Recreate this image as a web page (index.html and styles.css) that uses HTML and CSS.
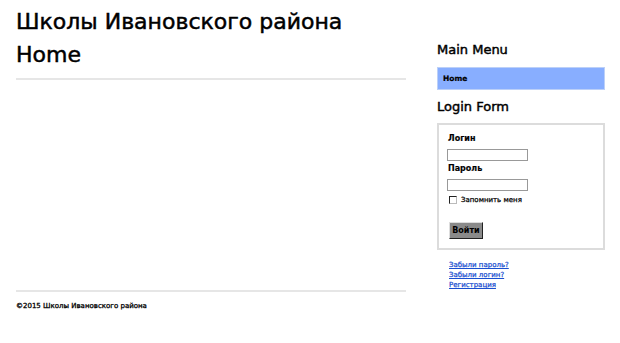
FILE: index.html
```html
<!DOCTYPE html>
<html lang="ru">
<head>
<meta charset="utf-8">
<title>Школы Ивановского района</title>
<link rel="stylesheet" href="styles.css">
</head>
<body>
<div class="page">
  <div class="layout">
    <div class="main">
      <div class="site-title">Школы Ивановского района</div>
      <h1 class="page-title">Home</h1>
    </div>
    <div class="sidebar">
      <h3 class="module-title">Main Menu</h3>
      <ul class="menu">
        <li class="menu-item active">Home</li>
      </ul>
      <h3 class="module-title">Login Form</h3>
      <form class="login-box">
        <label class="field-label">Логин</label>
        <input class="field-input first" type="text">
        <label class="field-label">Пароль</label>
        <input class="field-input" type="password">
        <label class="remember"><span class="check"></span>Запомнить меня</label>
        <button class="submit" type="button">Войти</button>
      </form>
      <ul class="links">
        <li><a href="#">Забыли пароль?</a></li>
        <li><a href="#">Забыли логин?</a></li>
        <li><a href="#">Регистрация</a></li>
      </ul>
    </div>
  </div>
  <div class="footer">
    <div class="footer-text">©2015 Школы Ивановского района</div>
  </div>
</div>
</body>
</html>
```
FILE: styles.css
```css
* { box-sizing: border-box; }
body {
  margin: 0;
  background: #fff;
  color: #000;
  font-family: "DejaVu Sans", Verdana, sans-serif;
}
.page { padding: 0 15px 0 16px; }
.layout { display: flex; gap: 31px; }
.main { width: 390px; }
.site-title {
  font-size: 22px;
  line-height: 28px;
  padding-top: 8px;
  -webkit-text-stroke: 0.5px #000;
}
.page-title {
  margin: 0;
  font-size: 22px;
  font-weight: normal;
  line-height: 28px;
  padding-top: 5px;
  padding-bottom: 9px;
  border-bottom: 2px solid #e6e6e6;
  -webkit-text-stroke: 0.5px #000;
}
.sidebar { width: 168px; padding-top: 42px; }
.module-title {
  margin: 0;
  font-size: 13px;
  line-height: 16px;
  font-weight: normal;
  -webkit-text-stroke: 0.45px #000;
}
.menu { list-style: none; margin: 9px 0 9px; padding: 0; }
.menu-item {
  background: #88aeff;
  border: 1px solid #bcd0f8;
  height: 23px;
  font-size: 7.5px;
  font-weight: bold;
  line-height: 21px;
  padding-left: 5px;
  -webkit-text-stroke: 0.2px #000;
}
.login-box {
  margin-top: 8px;
  border: 2px solid #dcdcdc;
  height: 127px;
  padding: 8px 0 0 8px;
  display: flex;
  flex-direction: column;
  align-items: flex-start;
}
.field-label {
  font-weight: bold;
  font-size: 8px;
  line-height: 12px;
  margin: 0 0 4px 1px;
  -webkit-text-stroke: 0.15px #000;
}
.field-input {
  width: 81px;
  height: 12px;
  border: 1px solid #999;
  padding: 0;
  margin: 0 0 2px;
}
.remember {
  display: flex;
  align-items: center;
  gap: 4px;
  font-size: 7px;
  margin-top: 2px;
  margin-left: 2px;
  line-height: 10px;
  -webkit-text-stroke: 0.25px #000;
}
.check {
  width: 8px;
  height: 8px;
  border: 1px solid #222;
  border-right-color: #bbb;
  border-bottom-color: #bbb;
  background: #fff;
  display: inline-block;
}
.submit {
  margin-top: 17px;
  margin-left: 2px;
  font-family: inherit;
  font-size: 8px;
  font-weight: bold;
  background: #8a8a8a;
  border: 1px solid #222;
  border-top-color: #ddd;
  border-left-color: #ddd;
  width: 34px;
  height: 17px;
  padding: 0;
  color: #000;
}
.links {
  list-style: none;
  margin: 10px 0 0;
  padding-left: 12px;
  font-size: 7px;
  line-height: 10px;
}
.links a { color: #1a4fd0; -webkit-text-stroke: 0.25px #1a4fd0; }
.footer {
  width: 390px;
  border-top: 2px solid #e6e6e6;
  padding-top: 9px;
}
.footer-text { font-size: 7px; line-height: 10px; -webkit-text-stroke: 0.3px #000; }
```
